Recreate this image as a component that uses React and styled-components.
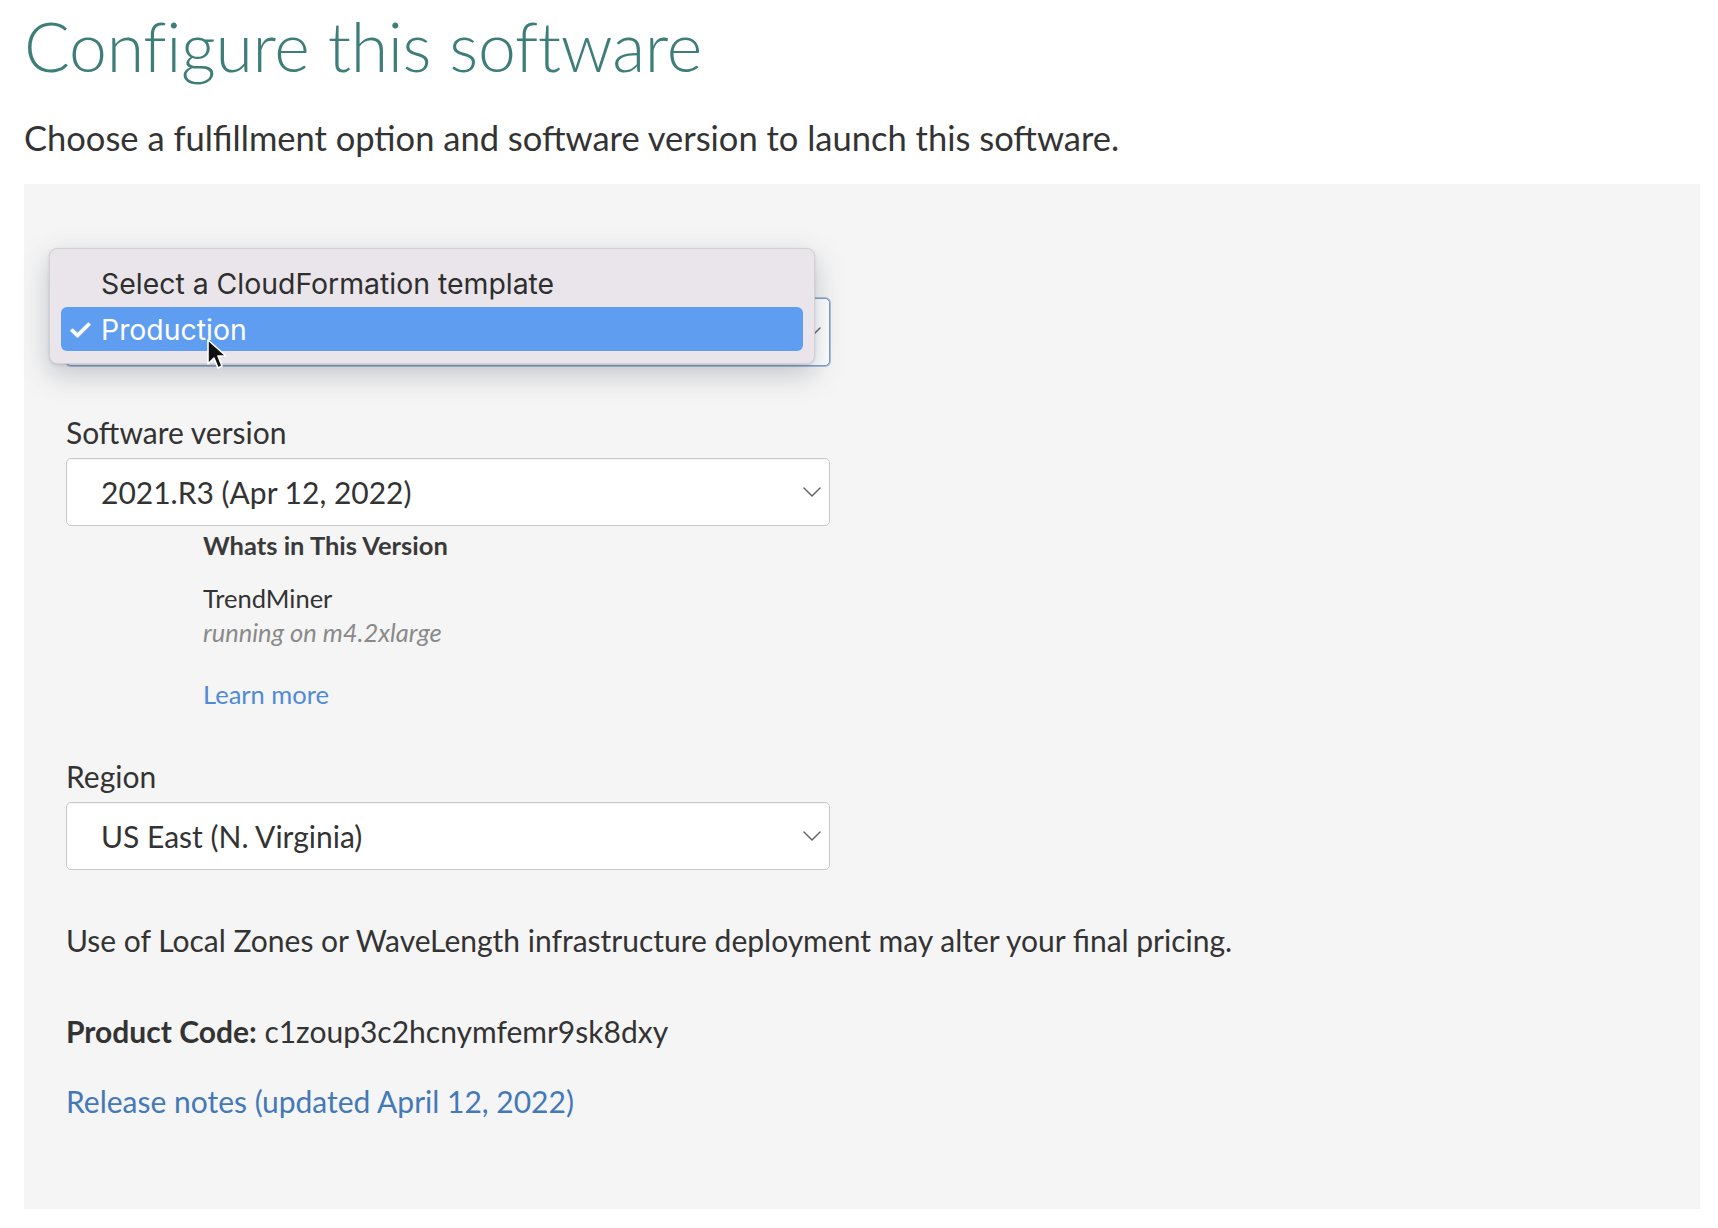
import React from 'react'
import styled, { createGlobalStyle } from 'styled-components'

const GlobalStyle = createGlobalStyle`
  body {
    margin: 0;
    background: #fff;
    font-family: Lato, "Open Sans", sans-serif;
    color: #333;
  }
`

const Chevron = ({ color = '#666' }) => (
  <svg width="18" height="10" viewBox="0 0 18 10" fill="none">
    <path d="M1 1l8 8 8-8" stroke={color} strokeWidth="1.5" strokeLinecap="round" strokeLinejoin="round" />
  </svg>
)

const Pointer = () => (
  <svg width="20" height="32" viewBox="0 0 20 32">
    <path d="M2 2v24l6-6 4 10 4-2-4-10h8z" fill="#111" stroke="#fff" strokeWidth="1.6" strokeLinejoin="round" />
  </svg>
)

export default () => (
  <Page>
    <GlobalStyle />
    <Title>Configure this software</Title>
    <Subtitle>Choose a fulfillment option and software version to launch this software.</Subtitle>
    <Panel>
      {/* fulfillment select, covered by the open menu */}
      <Field>
        <Label covered>Fulfillment option</Label>
        <Select focused>
          <Value covered>Production</Value>
          <Chevron />
        </Select>
      </Field>

      <Field>
        <Label>Software version</Label>
        <Select>
          <Value>2021.R3 (Apr 12, 2022)</Value>
          <Chevron />
        </Select>
      </Field>

      <VersionInfo>
        <InfoHeading>Whats in This Version</InfoHeading>
        <InfoName>TrendMiner</InfoName>
        <InfoNote>running on m4.2xlarge</InfoNote>
        <LearnMore href="#">Learn more</LearnMore>
      </VersionInfo>

      <Field>
        <Label>Region</Label>
        <Select>
          <Value>US East (N. Virginia)</Value>
          <Chevron />
        </Select>
      </Field>

      <Notice>Use of Local Zones or WaveLength infrastructure deployment may alter your final pricing.</Notice>
      <ProductCode><b>Product Code:</b> c1zoup3c2hcnymfemr9sk8dxy</ProductCode>
      <ReleaseNotes href="#">Release notes (updated April 12, 2022)</ReleaseNotes>

      <Menu>
        <MenuItem>Select a CloudFormation template</MenuItem>
        <MenuItem selected>
          <Check>✓</Check>Production
        </MenuItem>
        <Cursor>
          <Pointer />
        </Cursor>
      </Menu>
    </Panel>
  </Page>
)

const Page = styled.div`
  padding: 12px 18px 40px 24px;
`
const Title = styled.h1`
  margin: 0;
  font-size: 68px;
  line-height: 68px;
  font-weight: 300;
  color: #3d7e78;
  letter-spacing: -0.3px;
`
const Subtitle = styled.p`
  margin: 38px 0 0;
  font-size: 34.5px;
  line-height: 40px;
  color: #333;
`
const Panel = styled.section`
  position: relative;
  margin-top: 26px;
  width: 1676px;
  box-sizing: border-box;
  background: #f5f5f5;
  padding: 70px 0 90px 42px;
  display: flex;
  flex-direction: column;
  align-items: flex-start;
`
const Field = styled.div`
  display: flex;
  flex-direction: column;
  gap: 8px;
  & + & {
    margin-top: 48px;
  }
`
const Label = styled.label`
  font-size: 30px;
  line-height: 36px;
  color: #333;
  visibility: ${p => (p.covered ? 'hidden' : 'visible')};
`
const Select = styled.div`
  width: 764px;
  height: 68px;
  box-sizing: border-box;
  display: flex;
  align-items: center;
  justify-content: space-between;
  padding: 0 8px 0 34px;
  background: #fff;
  border: 1px solid ${p => (p.focused ? '#7f9ec6' : '#c9c9c9')};
  border-radius: 5px;
  box-shadow: ${p => (p.focused ? '0 0 0 1px #a9c0dd' : 'inset 0 1px 1px rgba(0,0,0,0.04)')};
  font-size: 30px;
  color: #333;
`
const Value = styled.span`
  visibility: ${p => (p.covered ? 'hidden' : 'visible')};
`
const VersionInfo = styled.div`
  margin: 4px 0 0 137px;
  display: flex;
  flex-direction: column;
  align-items: flex-start;
  font-size: 25.5px;
  line-height: 30px;
  & + ${Field} {
    margin-top: 49px;
  }
`
const InfoHeading = styled.div`
  font-weight: 700;
  color: #3a3a3a;
`
const InfoName = styled.div`
  margin-top: 23px;
  color: #333;
`
const InfoNote = styled.div`
  margin-top: 4px;
  font-style: italic;
  color: #8a8a8a;
`
const LearnMore = styled.a`
  margin-top: 32px;
  color: #4f8ad6;
  text-decoration: none;
`
const Notice = styled.p`
  margin: 52px 0 0;
  font-size: 30px;
  line-height: 36px;
  color: #333;
`
const ProductCode = styled.p`
  margin: 55px 0 0;
  font-size: 30px;
  line-height: 36px;
  color: #333;
  b {
    font-weight: 700;
  }
`
const ReleaseNotes = styled.a`
  margin-top: 34px;
  font-size: 30px;
  line-height: 36px;
  color: #4479b8;
  text-decoration: none;
`
const Menu = styled.div`
  position: absolute;
  left: 25px;
  top: 64px;
  width: 766px;
  height: 116px;
  box-sizing: border-box;
  padding: 12px 11px;
  background: #e9e5ea;
  border: 1px solid #d3cfd5;
  border-radius: 8px;
  box-shadow: 0 10px 28px rgba(60, 70, 90, 0.28), 0 1px 3px rgba(0, 0, 0, 0.12);
  display: flex;
  flex-direction: column;
  gap: 2px;
  font-family: Inter, "Noto Sans", sans-serif;
`
const MenuItem = styled.div`
  position: relative;
  height: 46px;
  display: flex;
  align-items: center;
  padding-left: 40px;
  border-radius: 6px;
  font-size: 28.4px;
  color: ${p => (p.selected ? '#fff' : '#2e2e2e')};
  background: ${p => (p.selected ? '#5f9df1' : 'transparent')};
`
const Check = styled.span`
  position: absolute;
  left: 6px;
  font-size: 29px;
  font-weight: 600;
`
const Cursor = styled.div`
  position: absolute;
  left: 156px;
  top: 89px;
  line-height: 0;
`
